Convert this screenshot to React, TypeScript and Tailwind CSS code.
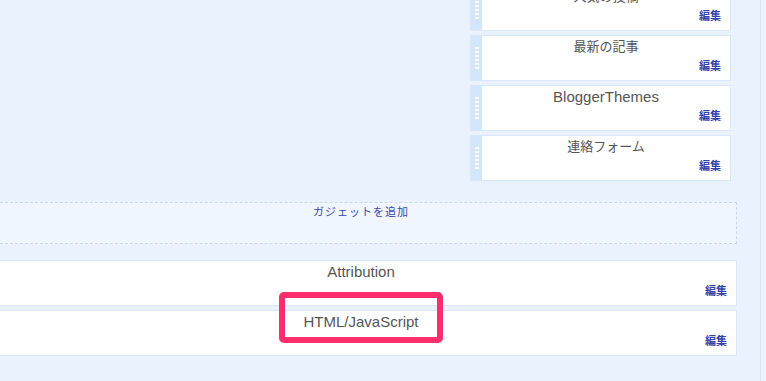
export default function App() {
  const font = { fontFamily: '"Liberation Sans", "Noto Sans CJK JP", sans-serif' };

  const Handle = () => (
    <div className="w-[11px] shrink-0 bg-[#d3e6fb] flex flex-col items-center justify-center gap-[2px]">
      {Array.from({ length: 6 }).map((_, i) => (
        <div key={i} className="w-[4px] h-[2px] bg-white/90" />
      ))}
    </div>
  );

  const SideWidget = ({ title, latin }: { title: string; latin?: boolean }) => (
    <div className="h-[46px] flex border border-[#d9e8f8] bg-white">
      <Handle />
      <div className="flex-1 flex flex-col">
        <div className={`mt-[2px] h-[18px] leading-[18px] text-center text-[#555] ${latin ? "text-[15px]" : "text-[13px]"}`}>{title}</div>
        <div className="mt-[3px] pr-[9px] text-right text-[11px] leading-[14px] font-semibold text-[#3344a8]">編集</div>
      </div>
    </div>
  );

  const WideWidget = ({ title }: { title: string }) => (
    <div className="h-[46px] flex flex-col border border-[#d9e8f8] bg-white">
      <div className="mt-[2px] h-[18px] leading-[18px] text-center text-[15px] text-[#555]">{title}</div>
      <div className="mt-[3px] pr-[9px] text-right text-[11px] leading-[14px] font-semibold text-[#3344a8]">編集</div>
    </div>
  );

  return (
    <div className="w-[766px] h-[381px] overflow-hidden bg-[#eef4fd] flex" style={font}>
      <div className="relative w-[761px] h-full shrink-0 bg-[#eaf2fe] border-r border-[#dae6f4] overflow-hidden">
        <div className="ml-[-15px] w-[752px] flex flex-col">
          {/* sidebar column */}
          <div className="mt-[-15px] self-end mr-[6px] w-[261px] flex flex-col gap-[4px]">
            <SideWidget title="人気の投稿" />
            <SideWidget title="最新の記事" />
            <SideWidget title="BloggerThemes" latin />
            <SideWidget title="連絡フォーム" />
          </div>

          {/* add gadget */}
          <div className="mt-[21px] h-[42px] border border-dashed border-[#c9d7ea] bg-[#f0f6fe] text-center">
            <div className="mt-[2px] text-[11px] leading-[14px] tracking-[1px] text-[#3a48a8]">ガジェットを追加</div>
          </div>

          {/* footer widgets */}
          <div className="mt-[16px] flex flex-col gap-[4px]">
            <WideWidget title="Attribution" />
            <WideWidget title="HTML/JavaScript" />
          </div>
        </div>

        {/* highlight */}
        <div className="absolute left-[279px] top-[292px] w-[164px] h-[51px] border-[6px] border-[#fd2e6d] rounded-[5px]" />
      </div>
    </div>
  );
}
